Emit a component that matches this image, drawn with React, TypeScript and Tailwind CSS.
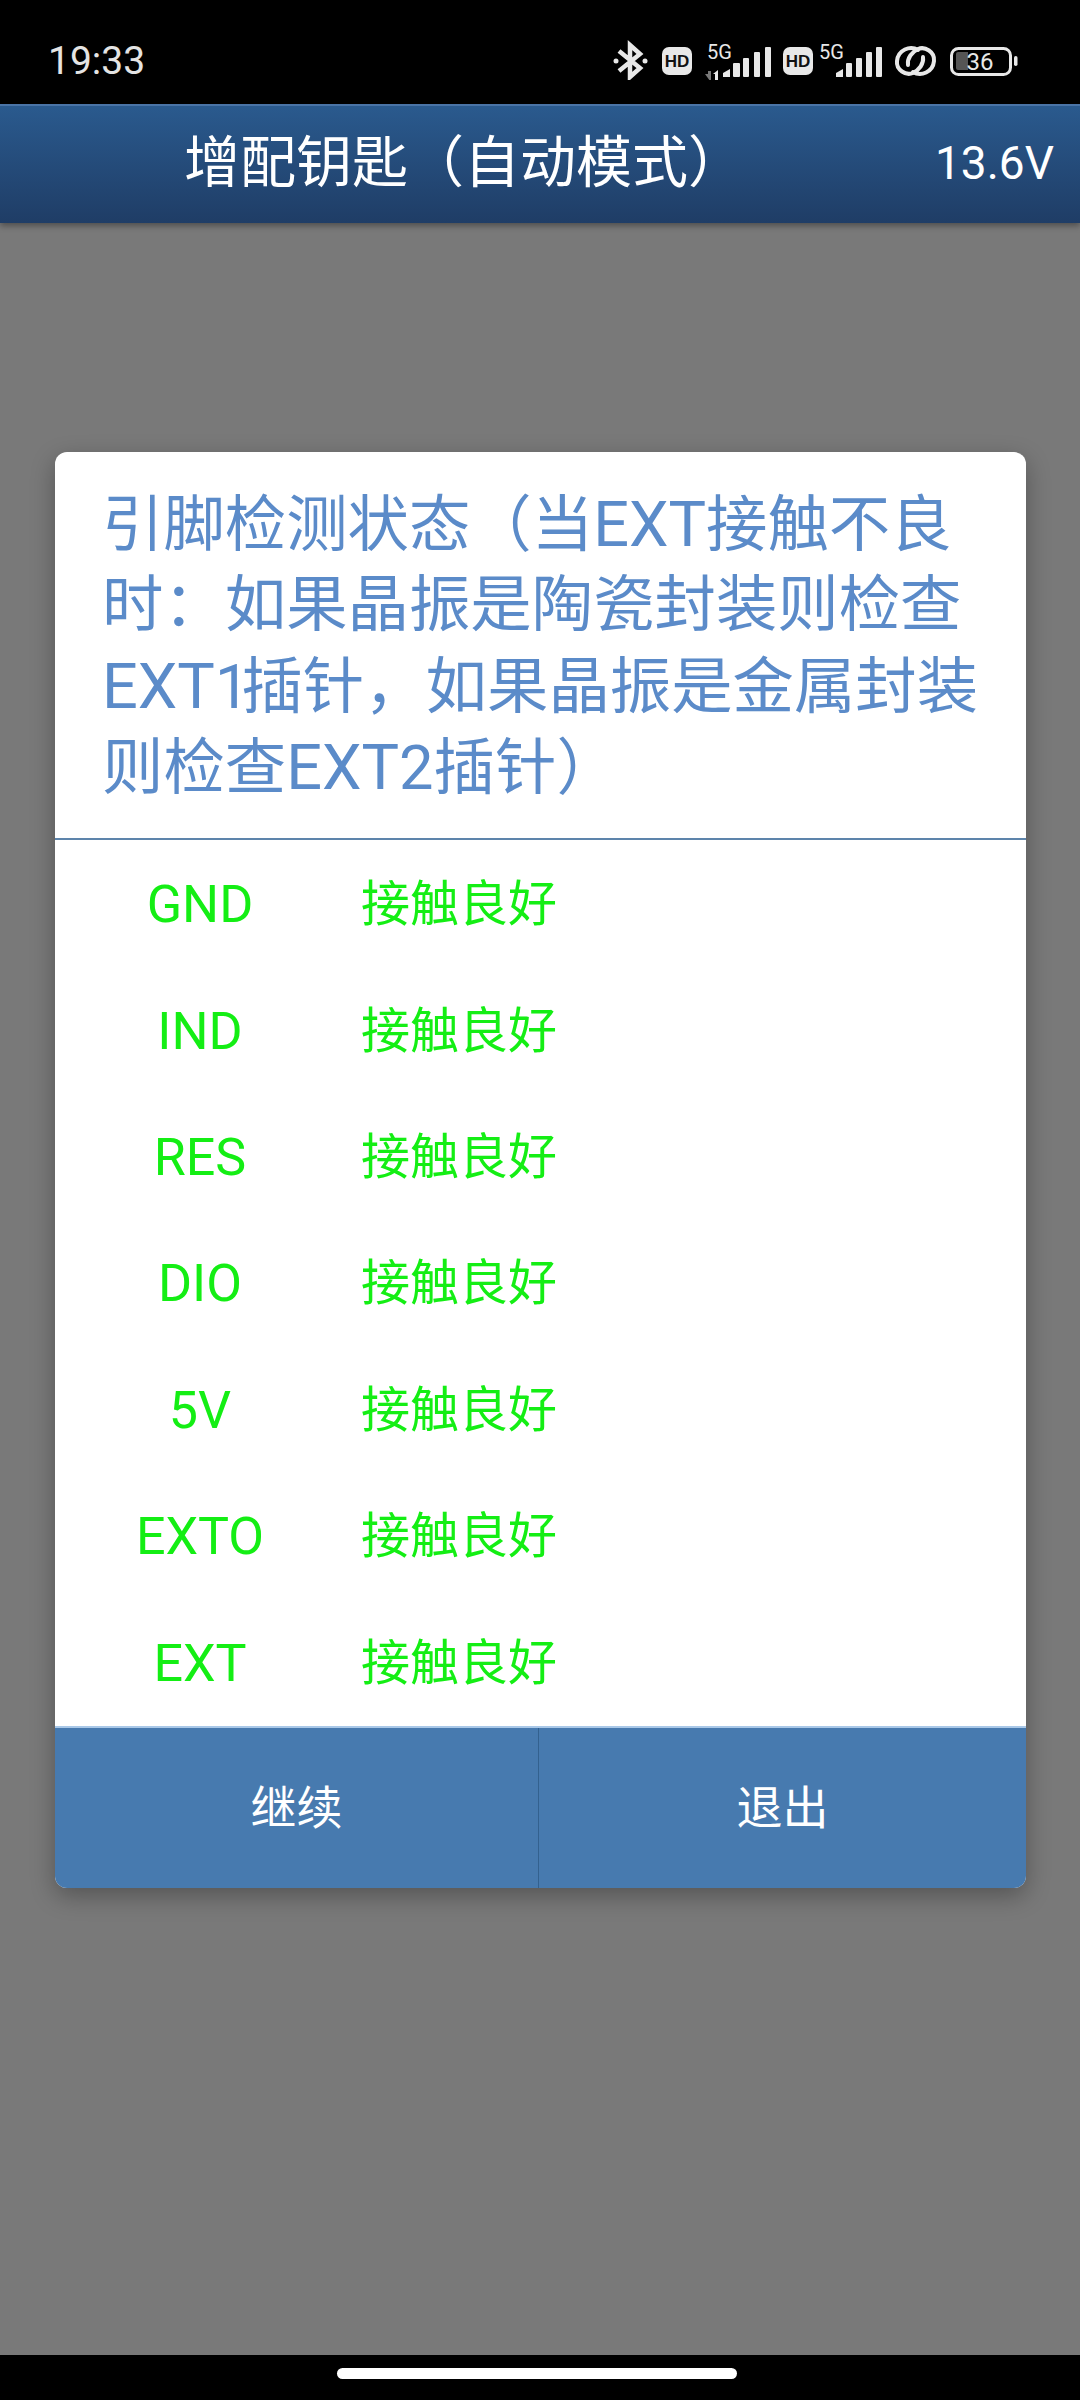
const font = { fontFamily: 'Roboto, "Noto Sans CJK SC", "Noto Sans", sans-serif' };
const rows = ["GND", "IND", "RES", "DIO", "5V", "EXTO", "EXT"];
const c = "#e8e8e8";

function StatusIcons() {
  return (
    <svg width="500" height="60" viewBox="0 0 500 60" className="block">
      <path d="M39 31 L60 48 L50 57 V25 L60 34 L39 51" fill="none" stroke={c} strokeWidth="4.5" />
      <circle cx="36" cy="41" r="2.5" fill={c} /><circle cx="65" cy="41" r="2.5" fill={c} />
      <rect x="82" y="27" width="30" height="28" rx="7" fill={c} />
      <text x="97" y="47" textAnchor="middle" fontSize="17" fontWeight="800" fill="#111" fontFamily="Liberation Sans">HD</text>
      <text x="127" y="39" fontSize="20" fill={c} fontFamily="Roboto">5G</text>
      <path d="M125 54h3v-3h3v10h-1z" fill="#777" />
      <path d="M133 54l5-4v11h-3v-7z" fill={c} />
      <path d="M143 53l7-4v8h-7z" fill={c} />
      <rect x="153" y="43" width="7" height="14" rx="1" fill={c} />
      <rect x="163" y="38" width="6" height="19" rx="1" fill={c} />
      <rect x="174" y="32" width="6" height="25" rx="1" fill={c} />
      <rect x="185" y="27" width="6" height="30" rx="1" fill={c} />
      <rect x="203" y="27" width="30" height="28" rx="7" fill={c} />
      <text x="218" y="47" textAnchor="middle" fontSize="17" fontWeight="800" fill="#111" fontFamily="Liberation Sans">HD</text>
      <text x="239" y="39" fontSize="20" fill={c} fontFamily="Roboto">5G</text>
      <path d="M256 53l7-4v8h-7z" fill={c} />
      <rect x="266" y="43" width="6" height="14" rx="1" fill={c} />
      <rect x="276" y="38" width="6" height="19" rx="1" fill={c} />
      <rect x="286" y="32" width="6" height="25" rx="1" fill={c} />
      <rect x="296" y="27" width="6" height="30" rx="1" fill={c} />
      <g fill="none" stroke={c} strokeWidth="4" strokeLinecap="round">
        <path d="M338 30 C330 25 318 30 317 41 C316 50 326 56 333 53 C339 50 344 44 343 37" />
        <path d="M333 52 C341 57 353 52 354 41 C355 32 345 26 338 29 C332 32 327 38 328 45" />
      </g>
      <rect x="371.5" y="28.5" width="59" height="26" rx="7" fill="none" stroke={c} strokeWidth="3" />
      <path d="M378 32h10v18h-10a2 2 0 0 1-2-2v-14a2 2 0 0 1 2-2z" fill="#555" />
      <text x="400" y="50" textAnchor="middle" fontSize="24" fill={c} fontFamily="Roboto">36</text>
      <rect x="434" y="36" width="3.5" height="10" rx="1.75" fill={c} />
    </svg>
  );
}

const Ext = () => <span className="text-[63px]">EXT</span>;

export default function App() {
  return (
    <div className="w-[1080px] h-[2400px] flex flex-col bg-[#797979] overflow-hidden" style={font}>
      <div className="h-[104px] bg-black flex items-start justify-between shrink-0">
        <span className="ml-[48px] mt-[38px] text-[39px] leading-[46px] text-[#e4e4e4]">19:33</span>
        <div className="mt-[20px]"><StatusIcons /></div>
      </div>
      <div className="h-[119px] shrink-0 flex items-center justify-between border-t-2 border-[#4a74a6] bg-gradient-to-b from-[#2a5a8e] to-[#1f3d66] shadow-[0_3px_6px_rgba(0,0,0,0.35)] pl-[184px] pr-[26px] z-10">
        <span className="text-[56px] leading-[60px] text-white mt-[-3px]">增配钥匙（自动模式）</span>
        <span className="text-[46px] leading-[60px] text-white mt-[-3px]">13.6V</span>
      </div>
      <div className="flex-1 flex flex-col">
        <div className="mt-[229px] ml-[55px] w-[971px] rounded-[12px] bg-white shadow-[0_8px_24px_rgba(0,0,0,0.3)] overflow-hidden">
          <div className="h-[386px] pl-[47px] pt-[32px] text-[#5b8bc9] text-[61.4px] leading-[81px] whitespace-nowrap">
            <div className="h-[81px]">引脚检测状态（当<Ext />接触不良</div>
            <div className="h-[81px]">时：如果晶振是陶瓷封装则检查</div>
            <div className="h-[81px]"><Ext /><span className="tracking-[-8px]">1</span>插针，如果晶振是金属封装</div>
            <div className="h-[81px]">则检查<Ext />2插针）</div>
          </div>
          <div className="h-[2px] bg-[#5d84ab]" />
          <div className="h-[886px] pt-[2px] flex flex-col">
            {rows.map((r) => (
              <div key={r} className="h-[126.4px] shrink-0 flex items-center text-[#14ee14] text-[49px] leading-[60px]">
                <span className="w-[290px] text-center text-[52px]">{r}</span>
                <span className="ml-[16px]">接触良好</span>
              </div>
            ))}
          </div>
          <div className="flex h-[162px] bg-[#477aaf] border-t-2 border-[#a9c8e8] text-white text-[46px]">
            <div className="w-[484px] flex items-center justify-center border-r border-[#33618f]">继续</div>
            <div className="flex-1 flex items-center justify-center">退出</div>
          </div>
        </div>
      </div>
      <div className="h-[45px] bg-black shrink-0 relative">
        <div className="absolute left-[337px] top-[13px] w-[400px] h-[11px] rounded-full bg-white" />
      </div>
    </div>
  );
}
